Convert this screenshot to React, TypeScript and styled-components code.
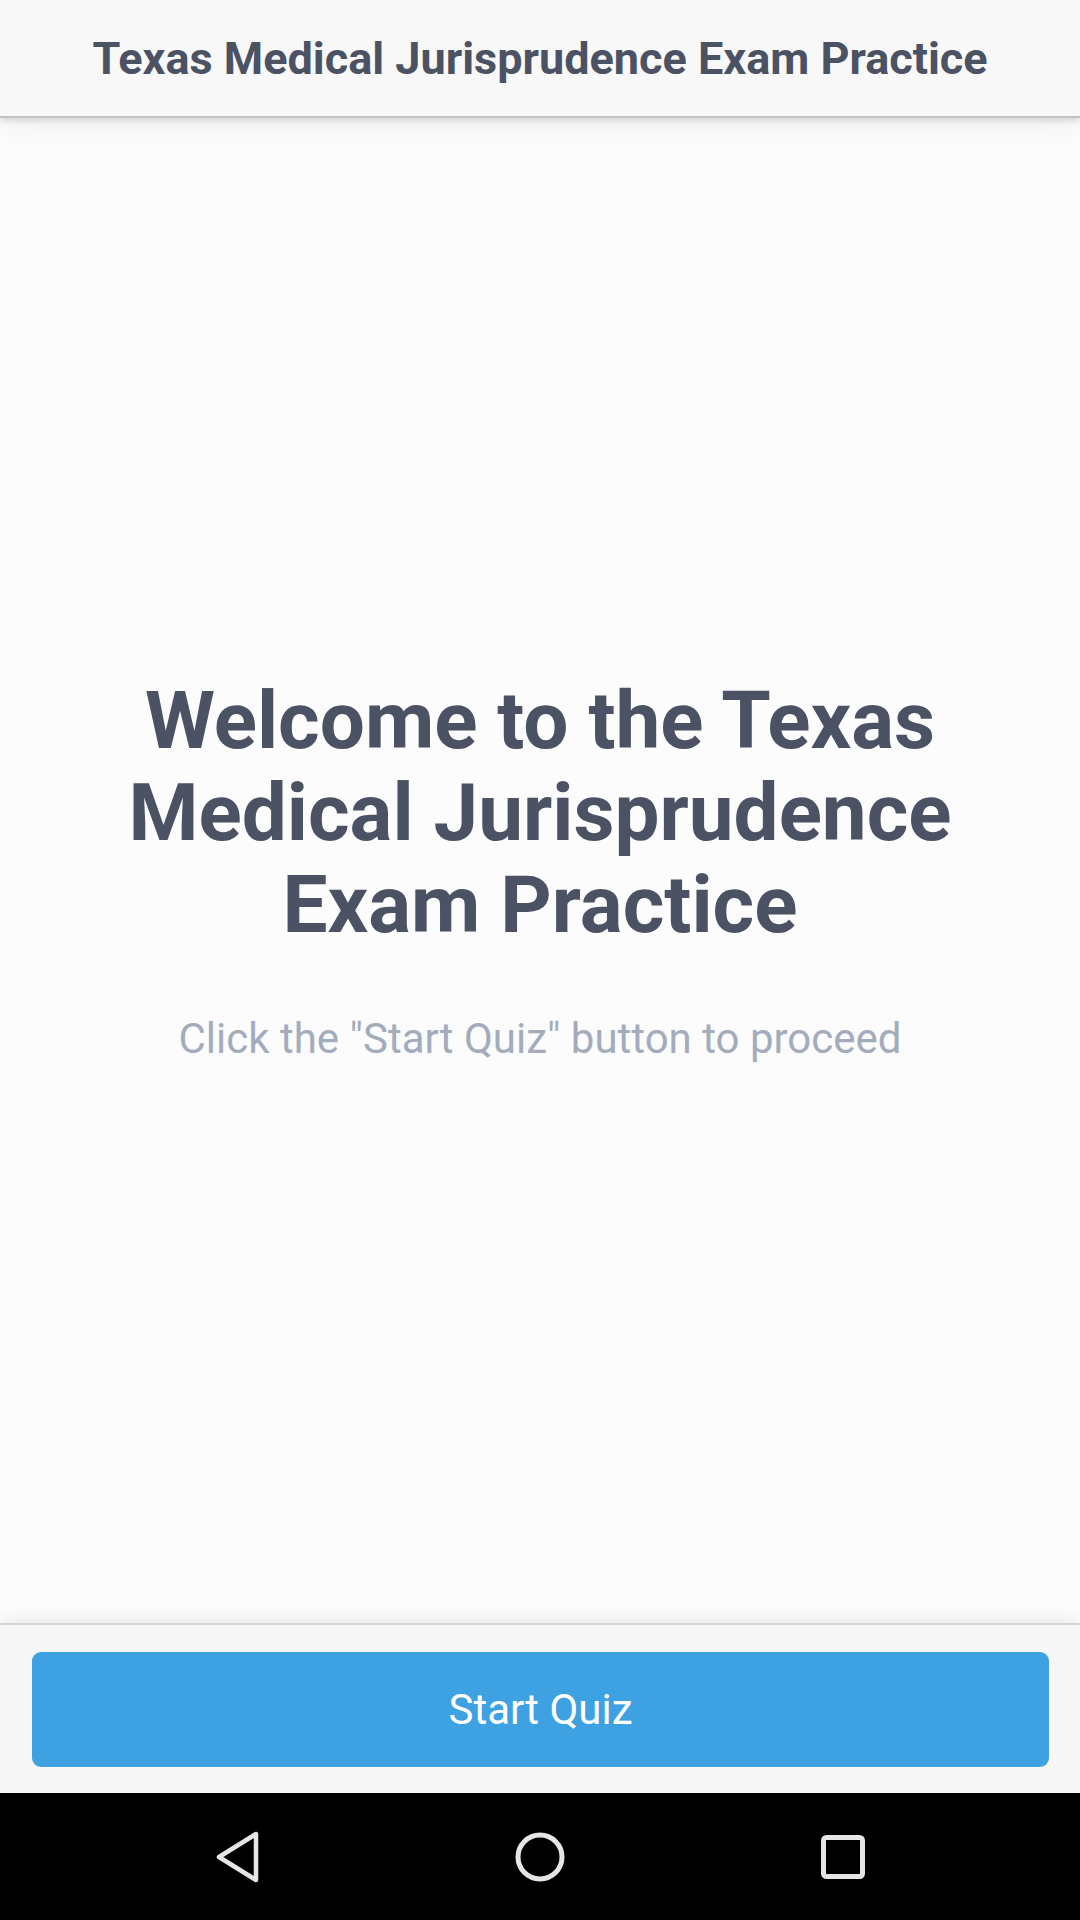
import React from "react";
import styled, { createGlobalStyle } from "styled-components";

const Global = createGlobalStyle`
  html, body { margin: 0; padding: 0; }
  body { font-family: Roboto, "Noto Sans", sans-serif; background: #fcfcfc; }
  * { box-sizing: border-box; }
`;

const Screen = styled.div`
  width: 1080px;
  height: 1920px;
  display: flex;
  flex-direction: column;
  background: #fcfcfc;
  overflow: hidden;
`;

const Header = styled.header`
  position: relative;
  z-index: 2;
  height: 118px;
  flex: 0 0 118px;
  display: flex;
  align-items: center;
  justify-content: center;
  background: #f8f8f8;
  border-bottom: 2px solid #c4c4c4;
  box-shadow: 0 3px 6px rgba(0, 0, 0, 0.12), 0 8px 30px rgba(0, 0, 0, 0.05);
`;

const HeaderTitle = styled.h1`
  margin: 0;
  font-size: 45px;
  font-weight: 700;
  color: #4a5263;
  letter-spacing: 0;
`;

const Main = styled.main`
  flex: 1;
  display: flex;
  flex-direction: column;
  align-items: center;
  justify-content: center;
  padding: 0 90px;
  text-align: center;
`;

const Welcome = styled.h2`
  margin: 0;
  font-size: 80px;
  line-height: 92px;
  font-weight: 700;
  color: #4a5263;
  max-width: 860px;
`;

const Hint = styled.p`
  margin: 61px 0 0;
  font-size: 42px;
  line-height: 54px;
  color: #a3acbd;
`;

const Footer = styled.footer`
  position: relative;
  z-index: 2;
  flex: 0 0 170px;
  display: flex;
  align-items: center;
  padding: 0 31px 0 32px;
  background: #f7f7f7;
  border-top: 2px solid #d6d6d6;
  box-shadow: 0 -4px 16px rgba(0, 0, 0, 0.07);
`;

const StartButton = styled.button`
  width: 100%;
  height: 115px;
  border: none;
  border-radius: 9px;
  background: #3ea1e1;
  color: #ffffff;
  font-family: Roboto, sans-serif;
  font-size: 42px;
  font-weight: 400;
  cursor: pointer;
`;

const NavBar = styled.nav`
  flex: 0 0 127px;
  display: flex;
  align-items: center;
  justify-content: center;
  background: #000;
`;

const NavSlot = styled.div`
  width: 303px;
  display: flex;
  justify-content: center;
  align-items: center;
`;

const NavIcon = styled.svg`
  width: 54px;
  height: 54px;
  display: block;
`;

export default function App() {
  return (
    <Screen>
      <Global />
      <Header>
        <HeaderTitle>Texas Medical Jurisprudence Exam Practice</HeaderTitle>
      </Header>
      <Main>
        <Welcome>Welcome to the Texas Medical Jurisprudence Exam Practice</Welcome>
        <Hint>Click the "Start Quiz" button to proceed</Hint>
      </Main>
      <Footer>
        <StartButton>Start Quiz</StartButton>
      </Footer>
      <NavBar>
        <NavSlot>
          <NavIcon viewBox="0 0 54 54">
            <path
              d="M46 4 L46 50 L9 27 Z"
              fill="none"
              stroke="#e6e6e6"
              strokeWidth="4.5"
              strokeLinejoin="round"
            />
          </NavIcon>
        </NavSlot>
        <NavSlot>
          <NavIcon viewBox="0 0 54 54">
            <circle cx="27" cy="27" r="22" fill="none" stroke="#e6e6e6" strokeWidth="5" />
          </NavIcon>
        </NavSlot>
        <NavSlot>
          <NavIcon viewBox="0 0 54 54">
            <rect x="7.5" y="7.5" width="39" height="39" rx="3" fill="none" stroke="#e6e6e6" strokeWidth="5" />
          </NavIcon>
        </NavSlot>
      </NavBar>
    </Screen>
  );
}
